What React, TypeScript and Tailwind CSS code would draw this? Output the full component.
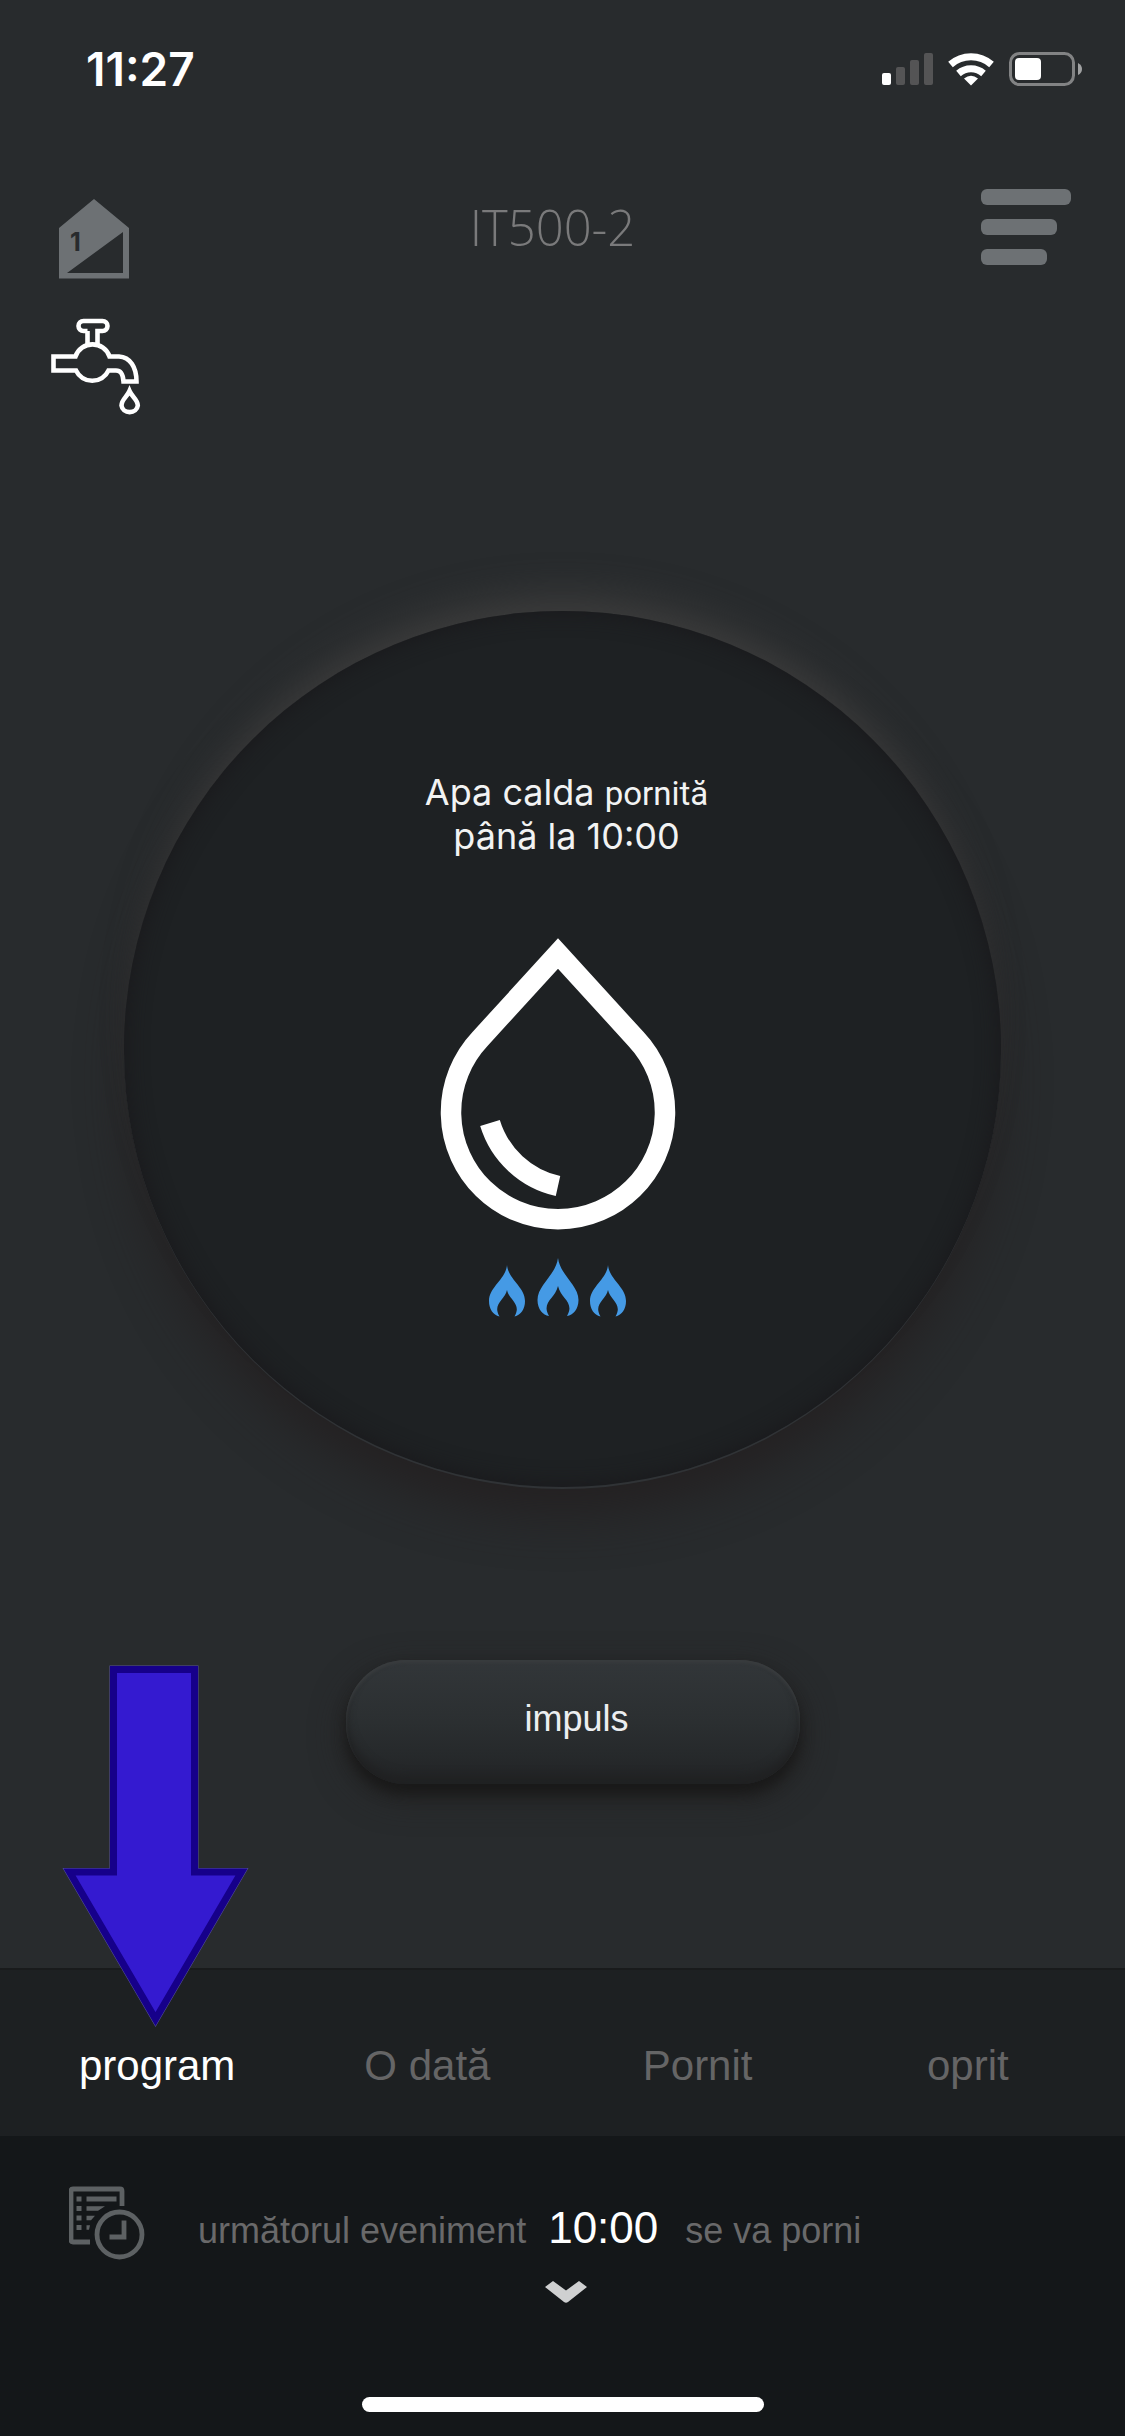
import { useState } from "react";

const modes = [
  { id: "auto", label: "program" },
  { id: "once", label: "O dată" },
  { id: "on", label: "Pornit" },
  { id: "off", label: "oprit" },
];

function StatusBar() {
  return (
    <div className="flex items-center justify-between h-[138px] pl-[86px] pr-[43px]">
      <span className="font-['Inter',sans-serif] text-[46px] leading-none font-semibold text-white">11:27</span>
      <svg className="w-[200px] h-[34px]" viewBox="0 0 200 34" aria-hidden="true">
        <rect x="0" y="21" width="9" height="12" rx="2" fill="#fff" />
        <rect x="14" y="15" width="9" height="18" rx="2" fill="#545455" />
        <rect x="28" y="8" width="9" height="25" rx="2" fill="#545455" />
        <rect x="42" y="1" width="9" height="32" rx="2" fill="#545455" />
        <g fill="none" stroke="#fff" strokeWidth="7">
          <path d="M68.500 12.500a31 31 0 0 1 41 0" />
          <path d="M76.500 21.500a19 19 0 0 1 25 0" />
        </g>
        <path d="M82 26.500q7-5.500 14 0L89 33.500z" fill="#fff" />
        <rect x="128.500" y="1.500" width="63" height="31" rx="9" fill="none" stroke="#828384" strokeWidth="3" />
        <rect x="133" y="6" width="26" height="22" rx="4" fill="#fff" />
        <path d="M196 11q4 2 4 6t-4 6z" fill="#a0a1a2" />
      </svg>
    </div>
  );
}

function HouseIcon() {
  return (
    <svg className="w-[72px] h-[80px]" viewBox="58 199 72 80">
      <path fillRule="evenodd" fill="#6d7174"
        d="M94 199L129 228V278.500H59V228zM67 273H123V232z" />
      <text x="70" y="251" fill="#282b2d" className="font-['Inter',sans-serif] text-[25px] font-bold">1</text>
    </svg>
  );
}

function TapIcon() {
  return (
    <svg className="w-[92px] h-[98px]" viewBox="50 318 92 98" fill="none" stroke="#fff" strokeWidth="4.600">
      <path d="M87.500 331H83.500A5 5 0 0 1 83.500 321H102.500A5 5 0 0 1 102.500 331H97.500V344.500M87.500 344.500V331" />
      <path d="M75.500 356.500A18 18 0 0 1 109.500 356.500H119C130 357 136.500 367 136.500 381.500H123.500C123 374 121 370.500 116 370.500H108.500A18 18 0 0 1 76 370.500H53.500V356.500z" />
      <path d="M129.500 391C127 397 121.500 399.500 121.500 405.500A8.200 7.500 0 0 0 137.800 405.500C137.800 399.500 132 397 129.500 391z" />
    </svg>
  );
}

function Header() {
  return (
    <header className="flex items-start justify-between pt-[51px] pl-[50px] pr-[54px]">
      <div className="flex flex-col items-start gap-[39px] pt-[10px]">
        <button className="pl-[8px]" aria-label="Zona 1"><HouseIcon /></button>
        <button aria-label="Apa calda"><TapIcon /></button>
      </div>
      <h1 className="flex-1 pr-[18px] text-center font-['Open_Sans',sans-serif] text-[49px] leading-[76px] font-light text-[#7a7a7b]">
        IT500-2
      </h1>
      <button className="flex flex-col items-start gap-[14px]" aria-label="Meniu">
        <span className="w-[90px] h-[16px] rounded-[6px] bg-[#6d7174]" />
        <span className="w-[76px] h-[16px] rounded-[6px] bg-[#6d7174]" />
        <span className="w-[66px] h-[16px] rounded-[6px] bg-[#6d7174]" />
      </button>
    </header>
  );
}

function WaterDrop() {
  return (
    <svg className="w-[236px] h-[296px]" viewBox="440 938 236 296" fill="none" stroke="#fff" strokeWidth="20.500">
      <path d="M558 953.500L636 1039A107 107 0 1 1 480 1039z" strokeMiterlimit="10" />
      <path d="M490 1123A92 92 0 0 0 558 1186" />
    </svg>
  );
}

function Flames() {
  return (
    <svg className="w-[140px] h-[60px]" viewBox="0 0 140 60" fill="#459ae5">
      <path d="M70 0C72 17 90.500 27 90.500 42C90.500 51 85 57.500 79 58C87 44 73 41 70 28C67 41 53 44 61 58C55 57.500 49.500 51 49.500 42C49.500 27 68 17 70 0z" />
      <path id="side" d="M19 7C20 21 37 29 37 43C37 51 33 57 26.500 58.500C34 46 21 42 19 32C17 42 4 46 11.500 58.500C5 57 1 51 1 43C1 29 18 21 19 7z" />
      <use href="#side" x="101" />
    </svg>
  );
}

function Dial() {
  return (
    <section className="flex flex-col items-center w-[78%] aspect-square rounded-full pt-[160px] bg-[#1e2123] border-b-2 border-[#303336] shadow-[inset_0_0_22px_#19181b,0_-34px_36px_-18px_#3c3c3c,0_30px_48px_-4px_#242122]">
      <p className="pl-[8px] text-center font-['Inter',sans-serif] text-[36px] leading-[42px] text-[#f2f3f3]">
        Apa calda <span className="text-[33px] font-['Roboto',sans-serif]">pornită</span>
        <br />
        până la 10:00
      </p>
      <div className="flex flex-col items-center gap-[24px] mt-[81px] pr-[10px]">
        <WaterDrop />
        <Flames />
      </div>
    </section>
  );
}

function ArrowPointer() {
  return (
    <svg className="absolute left-[62px] top-[-305px] w-[188px] h-[364px] pointer-events-none" viewBox="62 1664 188 364" aria-hidden="true">
      <path d="M113.500 1668.500H194.500V1871H241.500L155.500 2018L69.500 1871H113.500z"
        fill="none" stroke="#56529a" strokeWidth="8" />
      <path d="M113.500 1668.500H194.500V1871H241.500L155.500 2018L69.500 1871H113.500z"
        fill="#341ad0" stroke="#16008a" strokeWidth="7" />
    </svg>
  );
}

function ScheduleIcon() {
  return (
    <svg className="w-[76px] h-[74px]" viewBox="69 2186 76 74" fill="none" stroke="#5d6163" strokeWidth="4.800">
      <path d="M122 2206V2191Q122 2189 120 2189H73Q71 2189 71 2191V2240Q71 2242 73 2242H90" />
      <path d="M76.500 2199H81.500M76.500 2208.500H81.500M76.500 2218H81.500M76.500 2227.500H81.500M86.500 2199H116.500" />
      <path stroke="none" fill="#5d6163" d="M86.500 2206.200H105L98 2210.800H86.500zM86.500 2215.700H95L91 2220.300H86.500zM86.500 2225.200H90L89 2229.800H86.500z" />
      <circle cx="119.500" cy="2234.500" r="22.500" />
      <path d="M124 2220.500V2237H109.500" />
    </svg>
  );
}

export default function App() {
  const [mode, setMode] = useState("auto");

  return (
    <div className="flex flex-col min-h-screen bg-[#282b2d] font-['Liberation_Sans',Arial,sans-serif]">
      <StatusBar />
      <Header />
      <main className="flex flex-col items-center flex-1 pt-[195px]">
        <Dial />
        <button className="w-[454px] h-[124px] mt-[171px] ml-[20px] mb-[120px] pb-[5px] pl-[8px] rounded-[60px] text-[36px] text-[#eceef0] bg-linear-to-b from-[#323639] via-[#2b2f31] to-[#222426] shadow-[inset_0_3px_3px_#393c3e,inset_0_-8px_10px_#202122,0_10px_14px_#191919,0_12px_34px_#242323]">
          impuls
        </button>
      </main>
      <nav className="relative grid grid-cols-4 h-[168px] px-[22px] bg-[#1d2022] border-t-2 border-[#191b1c]">
        {modes.map(m => (
          <button key={m.id} onClick={() => setMode(m.id)}
            className={`pt-[30px] pb-[4px] text-[42px] leading-[48px] ${mode === m.id ? "text-white" : "text-[#656566]"}`}>
            {m.label}
          </button>
        ))}
        <ArrowPointer />
      </nav>
      <footer className="flex flex-col items-center h-[300px] pt-[50px] pb-[24px] bg-[#141719]">
        <div className="flex items-start w-full pl-[69px]">
          <ScheduleIcon />
          <p className="flex items-baseline pl-[53px] pt-[17px] text-[36px] leading-[50px] text-[#69696a]">
            următorul eveniment
            <time className="pl-[22px] pr-[27px] text-[44px] text-white">10:00</time>
            se va porni
          </p>
        </div>
        <button className="mt-[21px] ml-[6px]" aria-label="Extinde">
          <svg className="w-[42px] h-[22px]" viewBox="0 0 42 22">
            <path d="M0 6L8 0L21 9.500L34 0L42 6L23 21Q21 22.500 19 21z" fill="#cfd0d1" />
          </svg>
        </button>
        <div className="w-[402px] h-[15px] mt-auto rounded-full bg-white" />
      </footer>
    </div>
  );
}
